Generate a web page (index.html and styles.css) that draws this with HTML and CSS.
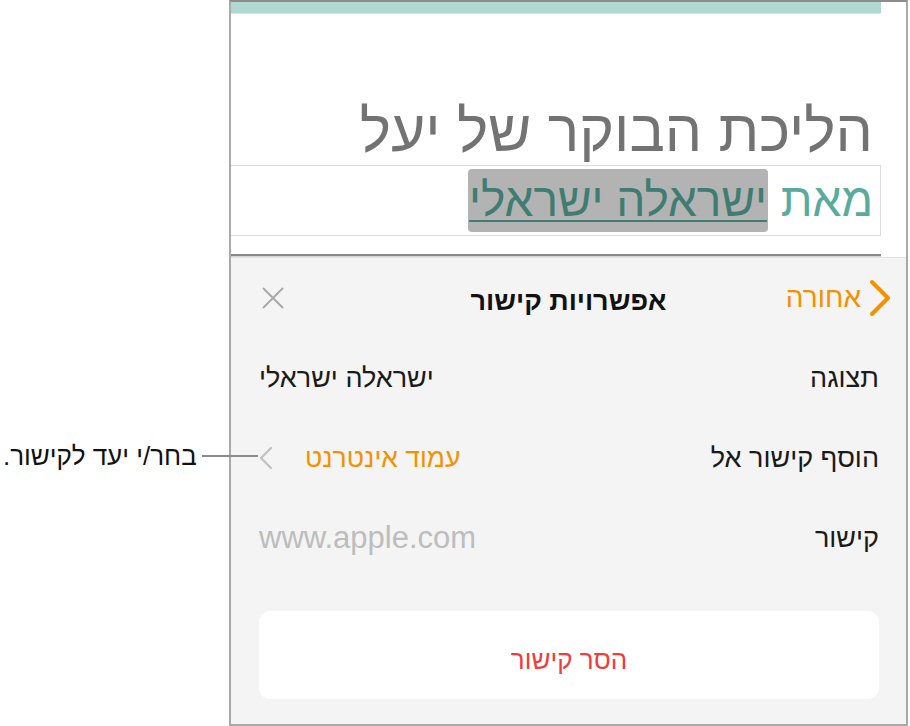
FILE: index.html
```html
<!DOCTYPE html>
<html lang="he">
<head>
<meta charset="utf-8">
<link rel="stylesheet" href="styles.css">
</head>
<body>
<div class="page">
  <div class="callout">
    <span class="callout-text">בחר/י יעד לקישור.</span>
    <span class="callout-line"></span>
  </div>
  <div class="device">
    <div class="doc">
      <div class="doc-col">
        <div class="teal-bar"></div>
        <div class="title">הליכת הבוקר של יעל</div>
        <div class="frame"><span class="by">מאת </span><span class="sel">ישראלה ישראלי</span></div>
        <div class="rule"></div>
      </div>
    </div>
    <div class="panel">
      <div class="header">
        <div class="back">
          <svg class="back-chev" width="24" height="38" viewBox="0 0 24 38"><path d="M4 3 L20 19 L4 35" fill="none" stroke="#f39200" stroke-width="4" stroke-linecap="round" stroke-linejoin="round"/></svg>
          <span>אחורה</span>
        </div>
        <div class="head-title">אפשרויות קישור</div>
        <svg class="close" width="22" height="22" viewBox="0 0 22 22"><path d="M1 1 L21 21 M21 1 L1 21" fill="none" stroke="#a9a9a9" stroke-width="2"/></svg>
      </div>
      <div class="row">
        <span class="label">תצוגה</span>
        <span class="value">ישראלה ישראלי</span>
      </div>
      <div class="row">
        <span class="label">הוסף קישור אל</span>
        <span class="value link-type">
          <span class="orange">עמוד אינטרנט</span>
          <svg class="chev" width="14" height="24" viewBox="0 0 14 24"><path d="M12 2 L2 12 L12 22" fill="none" stroke="#c2c2c2" stroke-width="2.4" stroke-linecap="round" stroke-linejoin="round"/></svg>
        </span>
      </div>
      <div class="row">
        <span class="label">קישור</span>
        <span class="value url">www.apple.com</span>
      </div>
      <div class="remove">הסר קישור</div>
    </div>
  </div>
</div>
</body>
</html>
```
FILE: styles.css
```css
* { box-sizing: border-box; }
html, body { margin: 0; padding: 0; background: #ffffff; }
body { font-family: "Liberation Sans", Arial, "DejaVu Sans", sans-serif; color: #111; }
.page { position: relative; width: 910px; height: 726px; display: flex; }
.device {
  margin-left: 229px;
  width: 679px;
  height: 726px;
  border: 2px solid #a9a9a9;
  border-top-color: #8c8c8c;
  display: flex;
  flex-direction: column;
  overflow: hidden;
}
.doc { background: #fff; padding-right: 25px; }
.doc-col { display: flex; flex-direction: column; }
.teal-bar { height: 12px; background: #b1d8d3; border-bottom: 1px solid #cfe8e5; }
.title {
  direction: rtl;
  text-align: right;
  font-size: 59px;
  color: #737373;
  padding-right: 8px;
  margin-top: 86px;
  line-height: 62px;
  height: 65px;
  white-space: nowrap;
}
.frame {
  direction: rtl;
  height: 71px;
  border: 1px solid #dcdcdc;
  border-left: none;
  padding-right: 7px;
  font-size: 46px;
  line-height: 63px;
  display: flex;
  align-items: center;
  white-space: nowrap;
}
.by { color: #5aab9e; white-space: pre; }
.sel {
  color: #3f7c72;
  background: #b3b3b3;
  border-radius: 4px;
  height: 63px;
  padding: 0 1px;
  text-decoration: underline;
  text-decoration-color: #3f7c72;
  text-decoration-thickness: 2px;
  text-underline-offset: 4px;
}
.rule { height: 3px; background: #8a8a8a; margin-top: 18px; border-bottom: 1px solid #d6d6d6; }
.panel {
  flex: 1;
  background: #f4f4f4;
  border-top: 1px solid #e2e2e2;
  padding: 0 27px 0 28px;
  display: flex;
  flex-direction: column;
}
.header {
  direction: rtl;
  height: 80px;
  display: flex;
  align-items: center;
  justify-content: space-between;
  position: relative;
  margin-right: -13px;
  margin-left: 3px;
}
.back { display: flex; align-items: center; gap: 7px; color: #f39200; font-size: 28px; }
.back-chev { display: block; }
.head-title {
  position: absolute;
  left: -31px;
  right: -14px;
  top: 28px;
  text-align: center;
  font-weight: bold;
  font-size: 27px;
  color: #111;
  pointer-events: none;
}
.close { display: block; }
.row {
  direction: rtl;
  height: 80px;
  display: flex;
  align-items: center;
  justify-content: space-between;
  font-size: 27px;
  color: #1a1a1a;
  white-space: nowrap;
}
.link-type { display: flex; align-items: center; gap: 32px; }
.orange { color: #f39200; font-size: 26.5px; }
.chev { display: block; }
.url { color: #bdbdbd; font-size: 31px; direction: ltr; }
.remove {
  direction: rtl;
  margin-top: 33px;
  height: 88px;
  background: #ffffff;
  border-radius: 11px;
  display: flex;
  align-items: center;
  justify-content: center;
  color: #f03c3c;
  font-size: 26px;
  padding-top: 10px;
}
.callout {
  position: absolute;
  left: 3px;
  top: 441px;
  height: 30px;
  display: flex;
  align-items: center;
  gap: 5px;
}
.callout-text { direction: rtl; font-size: 26px; color: #111; white-space: nowrap; }
.callout-line { width: 56px; height: 2px; background: #8c8c8c; }
```
